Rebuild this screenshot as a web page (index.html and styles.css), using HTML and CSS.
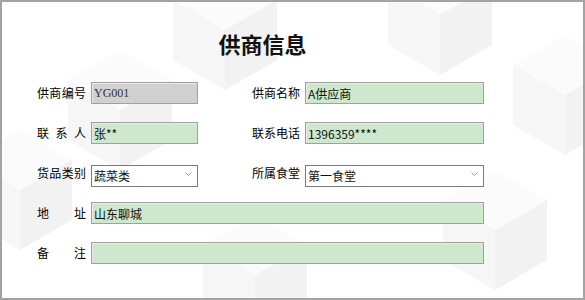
FILE: index.html
```html
<!DOCTYPE html>
<html lang="zh-CN">
<head>
  <meta charset="UTF-8">
  <title>供商信息</title>
  <link rel="stylesheet" href="styles.css">
</head>
<body>
  <div class="panel">
    <!-- faint cube pattern behind the form -->
    <svg class="backdrop" width="585" height="300" viewBox="0 0 585 300">
      <defs>
        <g id="cube">
          <polygon class="face-top" points="0,-60 52,-30 0,0 -52,-30"/>
          <polygon class="face-left" points="-52,-30 0,0 0,60 -52,30"/>
          <polygon class="face-right" points="0,0 52,-30 52,30 0,60"/>
        </g>
      </defs>
      <use href="#cube" x="225" y="30"/>
      <use href="#cube" x="440" y="15"/>
      <use href="#cube" x="565" y="95"/>
      <use href="#cube" x="20" y="190"/>
      <use href="#cube" x="255" y="275"/>
      <use href="#cube" x="495" y="230"/>
      <use href="#cube" x="120" y="110"/>
    </svg>

    <div class="form">
      <div class="title">供商信息</div>
      <div class="grid">
        <label class="label">供商编号</label>
        <input class="field field-disabled" value="YG001" readonly>
        <span></span>
        <label class="label">供商名称</label>
        <input class="field" value="A供应商">

        <label class="label">联系人</label>
        <input class="field" value="张**">
        <span></span>
        <label class="label">联系电话</label>
        <input class="field" value="1396359****">

        <label class="label">货品类别</label>
        <div class="select-wrap">
          <select class="select"><option>蔬菜类</option></select>
          <svg class="chevron" width="7" height="4" viewBox="0 0 7 4"><path d="M0.5 0.5 L3.5 3.5 L6.5 0.5" fill="none" stroke="#9a9a9a" stroke-width="1"/></svg>
        </div>
        <span></span>
        <label class="label">所属食堂</label>
        <div class="select-wrap">
          <select class="select"><option>第一食堂</option></select>
          <svg class="chevron" width="7" height="4" viewBox="0 0 7 4"><path d="M0.5 0.5 L3.5 3.5 L6.5 0.5" fill="none" stroke="#9a9a9a" stroke-width="1"/></svg>
        </div>

        <label class="label">地址</label>
        <input class="field wide" value="山东聊城">

        <label class="label">备注</label>
        <input class="field wide" value="">
      </div>
    </div>
  </div>
</body>
</html>
```

FILE: styles.css
```css
body {
  margin: 0;
  font-family: 'Noto Sans CJK SC', 'Liberation Sans', sans-serif;
  color: #111;
  background-color: #ffffff;
}

.panel {
  position: relative;
  width: 585px;
  height: 300px;
  box-sizing: border-box;
  border: 2px solid #a3a3a3;
  background-color: #ffffff;
  overflow: hidden;
}

.backdrop {
  position: absolute;
  left: -2px;
  top: -2px;
}

.face-top { fill: #fbfbfb; }
.face-left { fill: #f6f6f6; }
.face-right { fill: #f2f2f2; }

.form {
  position: relative;
  width: 447px;
  padding: 28px 0 0 35px;
}

.title {
  text-align: center;
  font-size: 22px;
  line-height: 26px;
  font-weight: bold;
  color: #111;
  margin-bottom: 26px;
  padding-left: 4px;
}

.grid {
  display: grid;
  grid-template-columns: 54px 107px 54px 53px 179px;
  grid-auto-rows: 22px;
  row-gap: 18px;
  align-items: center;
}

.label {
  font-size: 12px;
  line-height: 22px;
  padding-right: 5px;
  text-align: justify;
  text-align-last: justify;
  color: #000;
}

.field {
  box-sizing: border-box;
  width: 100%;
  height: 22px;
  margin: 0;
  padding: 0 2px;
  border: 1px solid #a0a0a0;
  box-shadow: inset 1px 1px 0 #e9e9e9;
  background-color: #cde8cc;
  font-family: 'Noto Sans CJK SC', 'Liberation Sans', sans-serif;
  font-size: 12px;
  color: #111;
  outline: none;
}

.field-disabled {
  background-color: #d0d0d0;
  font-family: 'Liberation Serif', 'Noto Sans CJK SC', serif;
  color: #333;
}

.wide {
  grid-column: 2 / -1;
}

.select-wrap {
  position: relative;
  height: 22px;
}

.select {
  -webkit-appearance: none;
  appearance: none;
  box-sizing: border-box;
  width: 100%;
  height: 22px;
  margin: 0;
  padding: 0 2px;
  border: 1px solid #7a7a7a;
  border-radius: 0;
  background-color: #ffffff;
  font-family: 'Noto Sans CJK SC', 'Liberation Sans', sans-serif;
  font-size: 12px;
  color: #111;
  outline: none;
}

.chevron {
  position: absolute;
  right: 6px;
  top: 10px;
  pointer-events: none;
}
```
